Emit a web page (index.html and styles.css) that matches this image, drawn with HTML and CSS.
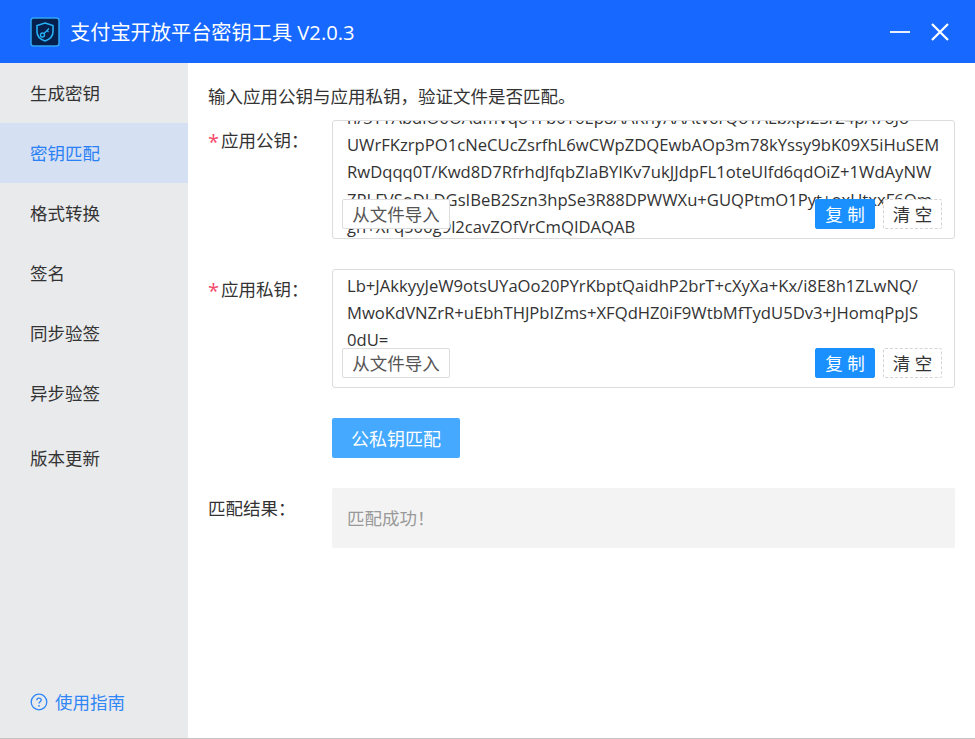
FILE: index.html
```html
<!DOCTYPE html>
<html lang="zh-CN">
<head>
<meta charset="utf-8">
<title>支付宝开放平台密钥工具</title>
<link rel="stylesheet" href="styles.css">
</head>
<body>
<div class="app">
  <header class="titlebar">
    <div class="brand">
      <svg class="logo" width="30" height="30" viewBox="0 0 30 30">
        <rect x="1" y="1" width="28" height="28" rx="2.5" fill="#06204d" stroke="#2fa4f5" stroke-width="1.5"/>
        <path d="M15 6l8 2.6v6.2c0 4.400-3.300 7.600-8 9.200-4.700-1.600-8-4.800-8-9.200V8.600z" fill="none" stroke="#27b0f5" stroke-width="1.600"/>
        <circle cx="12.500" cy="18" r="2" fill="none" stroke="#27b0f5" stroke-width="1.300"/>
        <path d="M14 16.500l5-5M17 13.500l1.500 1.500" fill="none" stroke="#27b0f5" stroke-width="1.300"/>
      </svg>
      <span class="app-title">支付宝开放平台密钥工具 V2.0.3</span>
    </div>
    <div class="win-controls">
      <svg width="20" height="20" viewBox="0 0 20 20"><path d="M0 10h20" stroke="#fff" stroke-width="1.800"/></svg>
      <svg width="20" height="20" viewBox="0 0 20 20"><path d="M2 2l16 16M18 2L2 18" stroke="#fff" stroke-width="2.200"/></svg>
    </div>
  </header>
  <div class="main">
    <nav class="sidebar">
      <a class="nav-item">生成密钥</a>
      <a class="nav-item active">密钥匹配</a>
      <a class="nav-item">格式转换</a>
      <a class="nav-item">签名</a>
      <a class="nav-item">同步验签</a>
      <a class="nav-item">异步验签</a>
      <a class="nav-item update">版本更新</a>
      <a class="guide">
        <svg width="18" height="18" viewBox="0 0 18 18"><circle cx="9" cy="9" r="7.800" fill="none" stroke="#2f86f6" stroke-width="1.300"/><path d="M6.800 7.200c0-1.300 1-2.100 2.200-2.100s2.200.8 2.200 2c0 1.700-2.200 1.700-2.200 3.400" fill="none" stroke="#2f86f6" stroke-width="1.300"/><circle cx="9" cy="12.800" r=".9" fill="#2f86f6"/></svg>
        <span>使用指南</span>
      </a>
    </nav>
    <main class="content">
      <p class="intro">输入应用公钥与应用私钥，验证文件是否匹配。</p>
      <div class="field field-public">
        <label class="label"><span class="star">*</span>应用公钥：</label>
        <div class="keybox">
          <div class="keytext scrolled">n/3YYAbdiO6OAdmVqo1Fb0Y6Ep8AAKhyAAAtv6rQoYALbxpl2SrZ4pA7oJo<br>UWrFKzrpPO1cNeCUcZsrfhL6wCWpZDQEwbAOp3m78kYssy9bK09X5iHuSEM<br>RwDqqq0T/Kwd8D7RfrhdJfqbZlaBYIKv7ukJJdpFL1oteUIfd6qdOiZ+1WdAyNW<br>ZPLFVSoDLDGsIBeB2Szn3hpSe3R88DPWWXu+GUQPtmO1Pyt+oxUtxxF6Om<br>gh+XFq506g9l2cavZOfVrCmQIDAQAB</div>
          <div class="actions">
            <button class="btn-import">从文件导入</button>
            <span class="spacer"></span>
            <button class="btn-copy">复 制</button>
            <button class="btn-clear">清 空</button>
          </div>
        </div>
      </div>
      <div class="field field-private">
        <label class="label"><span class="star">*</span>应用私钥：</label>
        <div class="keybox">
          <div class="keytext">Lb+JAkkyyJeW9otsUYaOo20PYrKbptQaidhP2brT+cXyXa+Kx/i8E8h1ZLwNQ/<br>MwoKdVNZrR+uEbhTHJPbIZms+XFQdHZ0iF9WtbMfTydU5Dv3+JHomqPpJS<br>0dU=</div>
          <div class="actions">
            <button class="btn-import">从文件导入</button>
            <span class="spacer"></span>
            <button class="btn-copy">复 制</button>
            <button class="btn-clear">清 空</button>
          </div>
        </div>
      </div>
      <div class="submit-row"><button class="btn-match">公私钥匹配</button></div>
      <div class="result-row">
        <div class="result-label">匹配结果：</div>
        <div class="result-box">匹配成功！</div>
      </div>
    </main>
  </div>
</div>
</body>
</html>
```

FILE: styles.css
```css
* { box-sizing: border-box; }
html, body { margin: 0; padding: 0; height: 100%; overflow: hidden; }
body { font-family: "Open Sans", "Noto Sans CJK SC", sans-serif; font-size: 17.5px; color: #333; background: #fff; }
.app { height: 739px; display: flex; flex-direction: column; border-bottom: 1px solid #c4c4c4; }
.titlebar { height: 63px; flex: none; background: #1668ff; color: #fff; display: flex; align-items: center; justify-content: space-between; padding: 0 25px 0 30px; }
.brand { display: flex; align-items: center; gap: 10px; }
.logo { display: block; }
.app-title { font-size: 20.2px; line-height: 28px; }
.win-controls { display: flex; gap: 20px; }
.win-controls svg { display: block; }
.main { flex: 1; display: flex; min-height: 0; }
.sidebar { width: 188px; flex: none; background: #e9eaec; display: flex; flex-direction: column; }
.nav-item { height: 60px; line-height: 60px; padding-left: 30px; color: #333; }
.nav-item.active { background: #d5e1f2; color: #2a80f5; }
.nav-item.update { margin-top: 5px; }
.guide { margin-top: auto; margin-bottom: 26px; padding-left: 30px; display: flex; align-items: center; gap: 7px; color: #2f86f6; line-height: 20px; }
.guide svg { display: block; }
.content { flex: 1; padding: 0 20px; min-width: 0; }
.intro { margin: 21px 0 0; height: 36px; line-height: 24px; }
.field { display: flex; height: 119px; }
.field-private { margin-top: 30px; }
.label { width: 124px; flex: none; line-height: 24px; padding-top: 8px; }
.star { color: #f5476b; margin-right: 4px; display: inline-block; width: 9px; font-size: 20px; line-height: 20px; vertical-align: -2px; }
.keybox { flex: 1; position: relative; border: 1px solid #dcdcdc; border-radius: 3px; overflow: hidden; }
.keytext { padding: 2px 14px 0; font-size: 16.64px; line-height: 27.2px; white-space: nowrap; color: #333; }
.keytext.scrolled { margin-top: -19px; }
.actions { position: absolute; left: 9px; right: 12px; top: 78px; display: flex; gap: 8px; height: 30px; }
.spacer { flex: 1; }
.actions button { font-family: inherit; height: 30px; padding: 0; margin: 0; border-radius: 2px; font-size: 17.5px; line-height: 28px; }
.btn-import { width: 108px; background: #fff; border: 1px solid #dcdcdc; color: #555; }
.btn-copy { width: 60px; background: #1a90ff; border: 1px solid #1a90ff; color: #fff; }
.btn-clear { width: 59px; background: #fff; border: 1px dashed #d4d4d4; color: #333; }
.submit-row { margin: 30px 0 0 124px; }
.btn-match { display: block; width: 128px; height: 40px; background: #44a9ff; border: 0; border-radius: 2px; color: #fff; font-family: inherit; font-size: 18px; }
.result-row { display: flex; margin-top: 30px; }
.result-label { width: 124px; flex: none; line-height: 24px; padding-top: 8px; }
.result-box { flex: 1; height: 60px; line-height: 60px; background: #f3f3f3; border-radius: 2px; padding-left: 15px; color: #999; }
```
